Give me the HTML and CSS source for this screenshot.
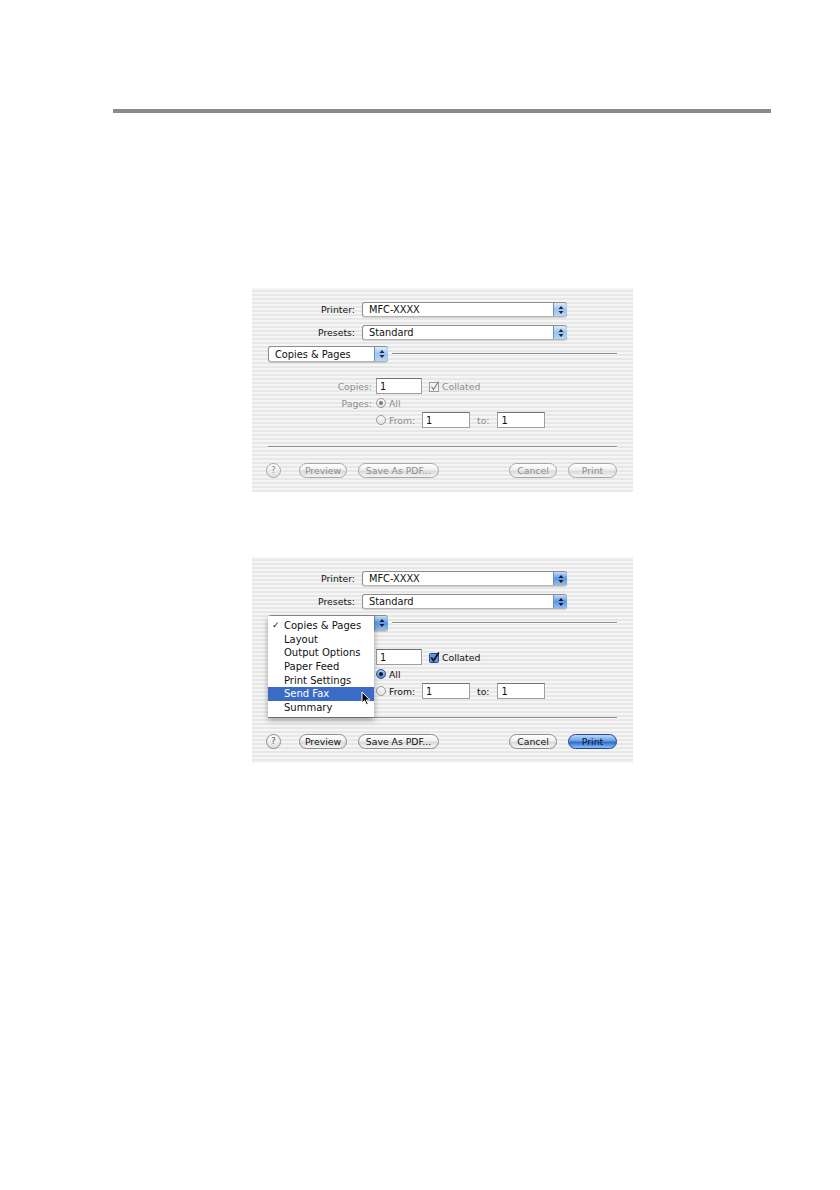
FILE: index.html
```html
<!DOCTYPE html>
<html>
<head>
<title>Print Dialog</title>
<link rel="stylesheet" href="styles.css">
</head>
<body>

<div class="page">
    <div class="rule"></div>

    <div class="dialog inactive">
        <div class="row first">
            <span class="label">Printer:</span>
            <div class="popup wide"><span class="value">MFC-XXXX</span><span class="arrows"><svg width="8" height="10" viewBox="0 0 8 10"><path d="M4 1 L6.5 4 H1.5 Z M4 9 L6.5 6 H1.5 Z" fill="#1a2a44"/></svg></span></div>
        </div>
        <div class="row second">
            <span class="label">Presets:</span>
            <div class="popup wide"><span class="value">Standard</span><span class="arrows"><svg width="8" height="10" viewBox="0 0 8 10"><path d="M4 1 L6.5 4 H1.5 Z M4 9 L6.5 6 H1.5 Z" fill="#1a2a44"/></svg></span></div>
        </div>
        <div class="pane-row">
            <div class="popup pane"><span class="value">Copies &amp; Pages</span><span class="arrows"><svg width="8" height="10" viewBox="0 0 8 10"><path d="M4 1 L6.5 4 H1.5 Z M4 9 L6.5 6 H1.5 Z" fill="#1a2a44"/></svg></span></div>
            <div class="pane-line"></div>
        </div>
        <div class="copies-row">
            <span class="opt-label">Copies:</span>
            <div class="field copies">1</div>
            <span class="check"><svg width="11" height="11" viewBox="0 0 11 11"><rect x="0.5" y="1.5" width="9" height="9" fill="#f4f4f4" stroke="#9a9a9a"/><path d="M2.5 5.5 L4.5 8.5 L9.5 0.5" fill="none" stroke="#8a8a8a" stroke-width="1.3"/></svg></span>
            <span class="dim">Collated</span>
        </div>
        <div class="pages-row">
            <span class="opt-label">Pages:</span>
            <span class="radio on"></span>
            <span class="dim">All</span>
        </div>
        <div class="from-row">
            <span class="radio"></span>
            <span class="dim from-label">From:</span>
            <div class="field range">1</div>
            <span class="dim to-label">to:</span>
            <div class="field range">1</div>
        </div>
        <div class="separator"></div>
        <div class="buttons">
            <span class="help">?</span>
            <span class="btn preview">Preview</span>
            <span class="btn save">Save As PDF...</span>
            <span class="spacer"></span>
            <span class="btn cancel">Cancel</span>
            <span class="btn print">Print</span>
        </div>
    </div>

    <div class="dialog active">
        <div class="row first">
            <span class="label">Printer:</span>
            <div class="popup wide"><span class="value">MFC-XXXX</span><span class="arrows"><svg width="8" height="10" viewBox="0 0 8 10"><path d="M4 1 L6.5 4 H1.5 Z M4 9 L6.5 6 H1.5 Z" fill="#0d1a33"/></svg></span></div>
        </div>
        <div class="row second">
            <span class="label">Presets:</span>
            <div class="popup wide"><span class="value">Standard</span><span class="arrows"><svg width="8" height="10" viewBox="0 0 8 10"><path d="M4 1 L6.5 4 H1.5 Z M4 9 L6.5 6 H1.5 Z" fill="#0d1a33"/></svg></span></div>
        </div>
        <div class="pane-row">
            <div class="popup pane"><span class="value covered">Copies &amp; Pages</span><span class="arrows"><svg width="8" height="10" viewBox="0 0 8 10"><path d="M4 1 L6.5 4 H1.5 Z M4 9 L6.5 6 H1.5 Z" fill="#0d1a33"/></svg></span></div>
            <div class="pane-line"></div>
        </div>
        <div class="copies-row">
            <span class="opt-label covered">Copies:</span>
            <div class="field copies">1</div>
            <span class="check"><svg width="11" height="11" viewBox="0 0 11 11"><rect x="0.5" y="1.5" width="9" height="9" rx="1" fill="#5f93dc" stroke="#2c4f8c"/><path d="M2.3 5.5 L4.5 8.7 L9.8 0.6" fill="none" stroke="#0b1530" stroke-width="1.8"/></svg></span>
            <span>Collated</span>
        </div>
        <div class="pages-row">
            <span class="opt-label covered">Pages:</span>
            <span class="radio on"></span>
            <span>All</span>
        </div>
        <div class="from-row">
            <span class="radio"></span>
            <span class="from-label">From:</span>
            <div class="field range">1</div>
            <span class="to-label">to:</span>
            <div class="field range">1</div>
        </div>
        <div class="separator"></div>
        <div class="buttons">
            <span class="help">?</span>
            <span class="btn preview">Preview</span>
            <span class="btn save">Save As PDF...</span>
            <span class="spacer"></span>
            <span class="btn cancel">Cancel</span>
            <span class="btn print default">Print</span>
        </div>

        <ul class="menu">
            <li><span class="tick">&#10003;</span>Copies &amp; Pages</li>
            <li>Layout</li>
            <li>Output Options</li>
            <li>Paper Feed</li>
            <li>Print Settings</li>
            <li class="selected">Send Fax</li>
            <li>Summary</li>
        </ul>
        <svg class="cursor" width="10" height="15" viewBox="0 0 10 15"><path d="M1 1 L1 12 L3.6 9.6 L5.6 14 L7.3 13.2 L5.3 9 L8.8 9 Z" fill="#000" stroke="#fff" stroke-width="1"/></svg>
    </div>
</div>

</body>
</html>
```

FILE: styles.css
```css
body {
    margin: 0;
    background-color: #fff;
    font-family: "DejaVu Sans", Verdana, sans-serif;
}
.page {
    width: 840px;
    height: 1190px;
    overflow: hidden;
}
.rule {
    margin: 109px 0 0 113px;
    width: 658px;
    height: 4px;
    background-color: #8a8a8a;
}

/* dialog window */
.dialog {
    position: relative;
    box-sizing: border-box;
    width: 381px;
    height: 204px;
    margin: 175px 0 0 252px;
    padding: 14px 16px 0 16px;
    font-size: 9.3px;
    color: #111;
    background: repeating-linear-gradient(to bottom, #f5f5f5 0px, #f5f5f5 2px, #e7e7e7 2px, #e7e7e7 4px);
}
.dialog.active {
    margin-top: 65px;
    height: 206px;
}
.dialog.active .copies-row {
    margin-top: 18px;
}

.row {
    display: flex;
    align-items: center;
    height: 15px;
}
.row.second {
    margin-top: 8px;
}
.label {
    width: 87px;
    text-align: right;
    margin-right: 7px;
}

/* aqua popup */
.popup {
    box-sizing: border-box;
    display: flex;
    align-items: center;
    height: 15px;
    background: #fff;
    border: 1px solid #8c8c8c;
    border-bottom-color: #b4b4b4;
    border-radius: 3px;
    box-shadow: 0 1px 1px rgba(0, 0, 0, 0.15);
}
.popup.wide {
    width: 205px;
}
.popup.pane {
    width: 120px;
    height: 16px;
}
.popup .value {
    flex: 1;
    padding-left: 6px;
    font-size: 9.8px;
}
.covered {
    visibility: hidden;
}
.popup .arrows {
    box-sizing: border-box;
    width: 14px;
    height: 100%;
    display: flex;
    align-items: center;
    justify-content: center;
    margin-right: -1px;
    border-radius: 0 3px 3px 0;
    border-left: 1px solid #6d8fba;
}
.inactive .popup .arrows {
    background: linear-gradient(to bottom, #dcebfb, #9cc3ee 50%, #b9d6f6);
}
.active .popup .arrows {
    background: linear-gradient(to bottom, #c6ddf8, #5c97e2 50%, #8fbcf0);
}

.pane-row {
    display: flex;
    align-items: center;
    margin-top: 6px;
}
.pane-line {
    flex: 1;
    margin-left: 4px;
    height: 1px;
    background-color: #8e8e8e;
    border-bottom: 1px solid #fafafa;
}

/* copies & pages options */
.copies-row,
.pages-row,
.from-row {
    display: flex;
    align-items: center;
}
.copies-row {
    margin-top: 16px;
    height: 16px;
}
.pages-row {
    margin-top: 2px;
    height: 14px;
}
.from-row {
    margin-top: 2px;
    height: 16px;
    padding-left: 108px;
}
.opt-label {
    width: 104px;
    text-align: right;
    margin-right: 4px;
}
.inactive .opt-label,
.dim {
    color: #8e8e8e;
}
.field {
    box-sizing: border-box;
    height: 16px;
    padding: 2px 0 0 3px;
    background: #fff;
    border: 1px solid #a0a0a0;
    border-top-color: #707070;
    font-size: 9.8px;
    color: #111;
}
.field.copies {
    width: 46px;
    margin-right: 7px;
}
.field.range {
    width: 48px;
}
.check {
    display: flex;
    margin-right: 2px;
}
.radio {
    box-sizing: border-box;
    width: 10px;
    height: 10px;
    margin-right: 3px;
    border-radius: 50%;
    background: linear-gradient(to bottom, #fafafa, #e2e2e2);
    border: 1px solid #9a9a9a;
    position: relative;
}
.radio.on::after {
    content: "";
    position: absolute;
    left: 2px;
    top: 2px;
    width: 4px;
    height: 4px;
    border-radius: 50%;
    background: #7a7a7a;
}
.active .radio.on {
    background: linear-gradient(to bottom, #a9cdf6, #4f8ad9);
    border-color: #2c4f8c;
}
.active .radio.on::after {
    background: #0b1530;
}
.from-label {
    width: 33px;
}
.to-label {
    margin: 0 8px 0 7px;
}

.separator {
    margin-top: 18px;
    height: 1px;
    background-color: #8e8e8e;
    border-bottom: 1px solid #fafafa;
}

/* bottom buttons */
.buttons {
    display: flex;
    align-items: center;
    margin-top: 15px;
    height: 15px;
}
.help {
    box-sizing: border-box;
    width: 15px;
    height: 15px;
    margin: 0 18px 0 -2px;
    border-radius: 50%;
    border: 1px solid #8c8c8c;
    background: linear-gradient(to bottom, #fff, #dedede);
    text-align: center;
    font-size: 9px;
    line-height: 13px;
    color: #555;
}
.btn {
    box-sizing: border-box;
    height: 15px;
    border: 1px solid #8c8c8c;
    border-radius: 8px;
    background: linear-gradient(to bottom, #ffffff, #f0f0f0 45%, #dadada 55%, #f4f4f4);
    text-align: center;
    font-size: 9.3px;
    line-height: 13px;
    color: #111;
}
.inactive .btn,
.inactive .help {
    color: #8e8e8e;
    border-color: #a8a8a8;
}
.btn.preview {
    width: 48px;
    margin-right: 11px;
}
.btn.save {
    width: 81px;
}
.spacer {
    flex: 1;
}
.btn.cancel {
    width: 48px;
    margin-right: 11px;
}
.btn.print {
    width: 49px;
}
.btn.default {
    border-color: #24468a;
    background: linear-gradient(to bottom, #bcd7f7, #6aa0e6 45%, #2f6cc9 55%, #8cc0f6);
    color: #0b1530;
}

/* open popup menu */
.menu {
    position: absolute;
    left: 16px;
    top: 59px;
    width: 106px;
    margin: 0;
    padding: 3px 0 2px 0;
    list-style: none;
    background: rgba(255, 255, 255, 0.97);
    box-shadow: 0 3px 6px rgba(0, 0, 0, 0.35);
    font-size: 10px;
}
.menu li {
    position: relative;
    height: 13.7px;
    line-height: 13.7px;
    padding-left: 16px;
    color: #111;
}
.menu li.selected {
    background-color: #3a6cc6;
    color: #fff;
}
.tick {
    position: absolute;
    left: 4px;
    font-size: 9px;
}
.cursor {
    position: absolute;
    left: 109px;
    top: 134px;
}
```
